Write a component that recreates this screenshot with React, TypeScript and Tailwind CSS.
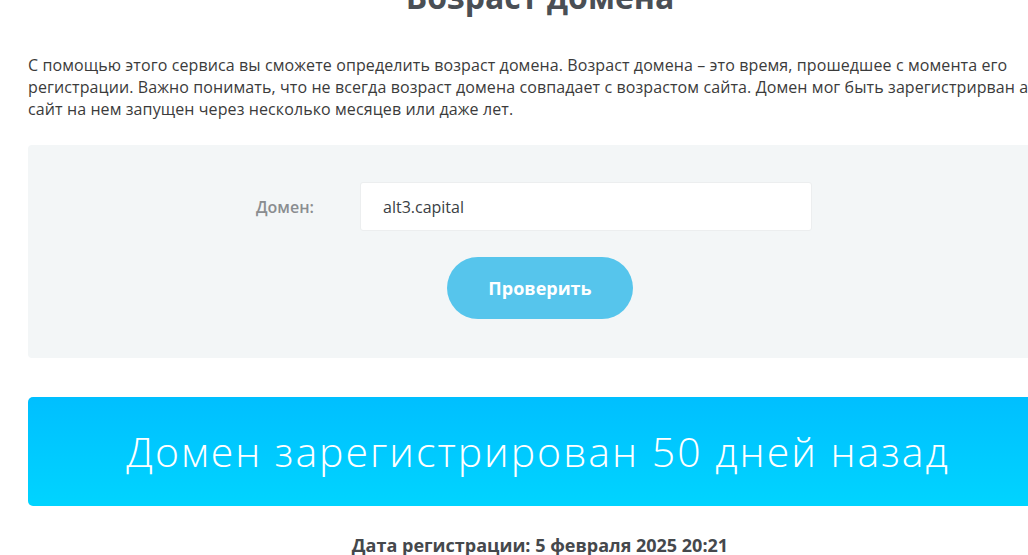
import React from 'react';

export default function App() {
  return (
    <div className="w-full h-[555px] overflow-hidden bg-white" style={{ fontFamily: '"Open Sans", "Liberation Sans", sans-serif' }}>
      <div className="ml-[28px] w-[1024px]">
        <h1 className="mt-[-23px] text-center text-[32px] leading-[40px] font-bold text-[#4a4f55]">
          Возраст домена
        </h1>

        <p className="mt-[37px] text-[16px] leading-[22px] tracking-[0.1px] text-[#3b3b3b] whitespace-nowrap">
          С помощью этого сервиса вы сможете определить возраст домена. Возраст домена – это время, прошедшее с момента его
          <br />
          регистрации. Важно понимать, что не всегда возраст домена совпадает с возрастом сайта. Домен мог быть зарегистрирван а
          <br />
          сайт на нем запущен через несколько месяцев или даже лет.
        </p>

        <div className="mt-[25px] h-[213px] rounded-[4px] bg-[#f3f6f7] pt-[37px] flex flex-col items-center">
          <div className="flex items-center gap-[42px] ml-[-12px]">
            <label className="w-[62px] text-[16px] font-semibold text-[#8a8d90]">Домен:</label>
            <input
              readOnly
              value="alt3.capital"
              className="w-[452px] h-[49px] rounded-[3px] border border-[#eceeef] bg-white px-[22px] text-[16px] text-[#3b3f44] outline-none"
            />
          </div>
          <button className="mt-[26px] w-[186px] h-[62px] rounded-full bg-[#56c5ec] text-white text-[18px] font-bold">
            Проверить
          </button>
        </div>

        <div className="mt-[39px] h-[109px] rounded-[5px] bg-gradient-to-b from-[#00bfff] to-[#00d4ff] flex items-center justify-center">
          <span className="text-white text-[41px] font-light tracking-[2px] ml-[-4px]">
            Домен зарегистрирован 50 дней назад
          </span>
        </div>

        <div className="mt-[26px] text-center text-[18px] font-bold text-[#45484c]">
          Дата регистрации: 5 февраля 2025 20:21
        </div>
      </div>
    </div>
  );
}
